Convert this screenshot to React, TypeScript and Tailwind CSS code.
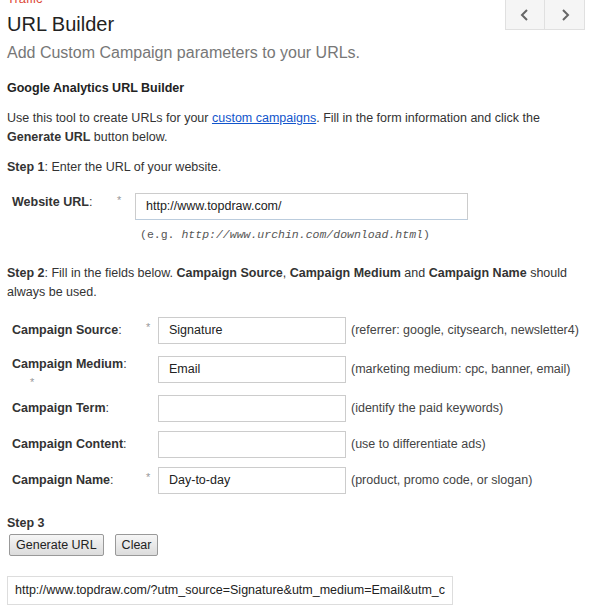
import React from "react";

const rows = [
  { label: "Campaign Source:", req: true, value: "Signature", hint: "(referrer: google, citysearch, newsletter4)", gap: "mt-0" },
  { label: "Campaign Medium:", req: true, under: true, value: "Email", hint: "(marketing medium: cpc, banner, email)", gap: "mt-[12px]" },
  { label: "Campaign Term:", req: false, value: "", hint: "(identify the paid keywords)", gap: "mt-[12px]" },
  { label: "Campaign Content:", req: false, value: "", hint: "(use to differentiate ads)", gap: "mt-[9px]" },
  { label: "Campaign Name:", req: true, value: "Day-to-day", hint: "(product, promo code, or slogan)", gap: "mt-[9px]" },
];

export default function App() {
  return (
    <div className="w-[590px] h-[611px] bg-white overflow-hidden font-['Liberation_Sans',Arial,sans-serif] text-[#333] text-[12.5px]">
      {/* header */}
      <div className="flex justify-between">
        <div className="pl-[7px]">
          <div className="h-[5px] overflow-hidden flex items-end">
            <span className="text-[13px] leading-[13px] text-[#dd4b39]">Traffic</span>
          </div>
          <h1 className="text-[20px] leading-[24px] mt-[7px] text-[#222]">URL Builder</h1>
        </div>
        <div className="flex mr-[5px] h-[30px] border border-t-0 border-[#e0e0e0] bg-[#f5f5f5]">
          <button className="w-[39px] flex items-center justify-center border-r border-[#e0e0e0] text-[#666]">
            <svg width="10" height="12" viewBox="0 0 10 12" fill="none" stroke="currentColor" strokeWidth="2">
              <path d="M7 1 L2 6 L7 11" />
            </svg>
          </button>
          <button className="w-[39px] flex items-center justify-center text-[#666]">
            <svg width="10" height="12" viewBox="0 0 10 12" fill="none" stroke="currentColor" strokeWidth="2">
              <path d="M3 1 L8 6 L3 11" />
            </svg>
          </button>
        </div>
      </div>

      <p className="pl-[7px] mt-[7px] text-[16px] leading-[20px] text-[#777]">Add Custom Campaign parameters to your URLs.</p>

      <div className="pl-[7px] pr-[10px]">
        <h2 className="mt-[17px] font-bold text-[12.5px] leading-[16px] text-[#222]">Google Analytics URL Builder</h2>

        <p className="mt-[13px] leading-[19px]">
          Use this tool to create URLs for your{" "}
          <a className="text-[#15c] underline">custom campaigns</a>. Fill in the form information and click the{" "}
          <b>Generate URL</b> button below.
        </p>

        <p className="mt-[11px] leading-[19px]">
          <b>Step 1</b>: Enter the URL of your website.
        </p>

        <div className="mt-[16px] flex items-start pl-[5px]">
          <span className="w-[105px] font-bold pt-[1px] leading-[16px]">
            Website URL<span className="font-normal">:</span>
          </span>
          <span className="w-[18px] text-[#999] text-[11px] leading-[14px]">*</span>
          <div>
            <div className="w-[333px] h-[27px] border border-[#ccc] border-b-[#bcd] flex items-center pl-[10px] text-[#222]">
              http://www.topdraw.com/
            </div>
            <div className="mt-[6px] pl-[5px] font-['Liberation_Mono',monospace] text-[11.5px] text-[#555]">
              (e.g. <i>http://www.urchin.com/download.html</i>)
            </div>
          </div>
        </div>

        <p className="mt-[21px] leading-[19px]">
          <b>Step 2</b>: Fill in the fields below. <b>Campaign Source</b>, <b>Campaign Medium</b> and <b>Campaign Name</b> should always be used.
        </p>

        <div className="mt-[15px] pl-[5px] flex flex-col">
          {rows.map((r) => (
            <div key={r.label} className={`flex items-center h-[27px] ${r.gap}`}>
              <div className={`w-[134px] relative font-bold self-start leading-[16px] ${r.under ? "pt-[0px]" : "pt-[5px]"}`}>
                {r.label.slice(0, -1)}
                <span className="font-normal">:</span>
                {r.under && <span className="absolute left-[18px] top-[18px] text-[#999] font-normal text-[11px]">*</span>}
              </div>
              <span className="w-[12px] text-[#999] text-[11px] self-start pt-[2px]">{r.req && !r.under ? "*" : ""}</span>
              <div className="w-[188px] h-[27px] border border-[#ccc] flex items-center pl-[10px] text-[#222]">{r.value}</div>
              <span className="ml-[5px] text-[#444]">{r.hint}</span>
            </div>
          ))}
        </div>

        <div className="mt-[21px] font-bold leading-[16px]">Step 3</div>
        <div className="mt-[3px] flex gap-[11px] pl-[2px]">
          <button className="h-[22px] px-[6px] border border-[#999] rounded-[2px] bg-gradient-to-b from-[#f6f6f6] to-[#dcdcdc] text-[#222] leading-[18px]">Generate URL</button>
          <button className="h-[22px] px-[6px] border border-[#999] rounded-[2px] bg-gradient-to-b from-[#f6f6f6] to-[#dcdcdc] text-[#222] leading-[18px]">Clear</button>
        </div>

        <div className="mt-[20px] w-[446px] h-[29px] border border-[#ddd] flex items-center pl-[7px] overflow-hidden whitespace-nowrap text-[#222]">
          http://www.topdraw.com/?utm_source=Signature&amp;utm_medium=Email&amp;utm_c
        </div>
      </div>
    </div>
  );
}
